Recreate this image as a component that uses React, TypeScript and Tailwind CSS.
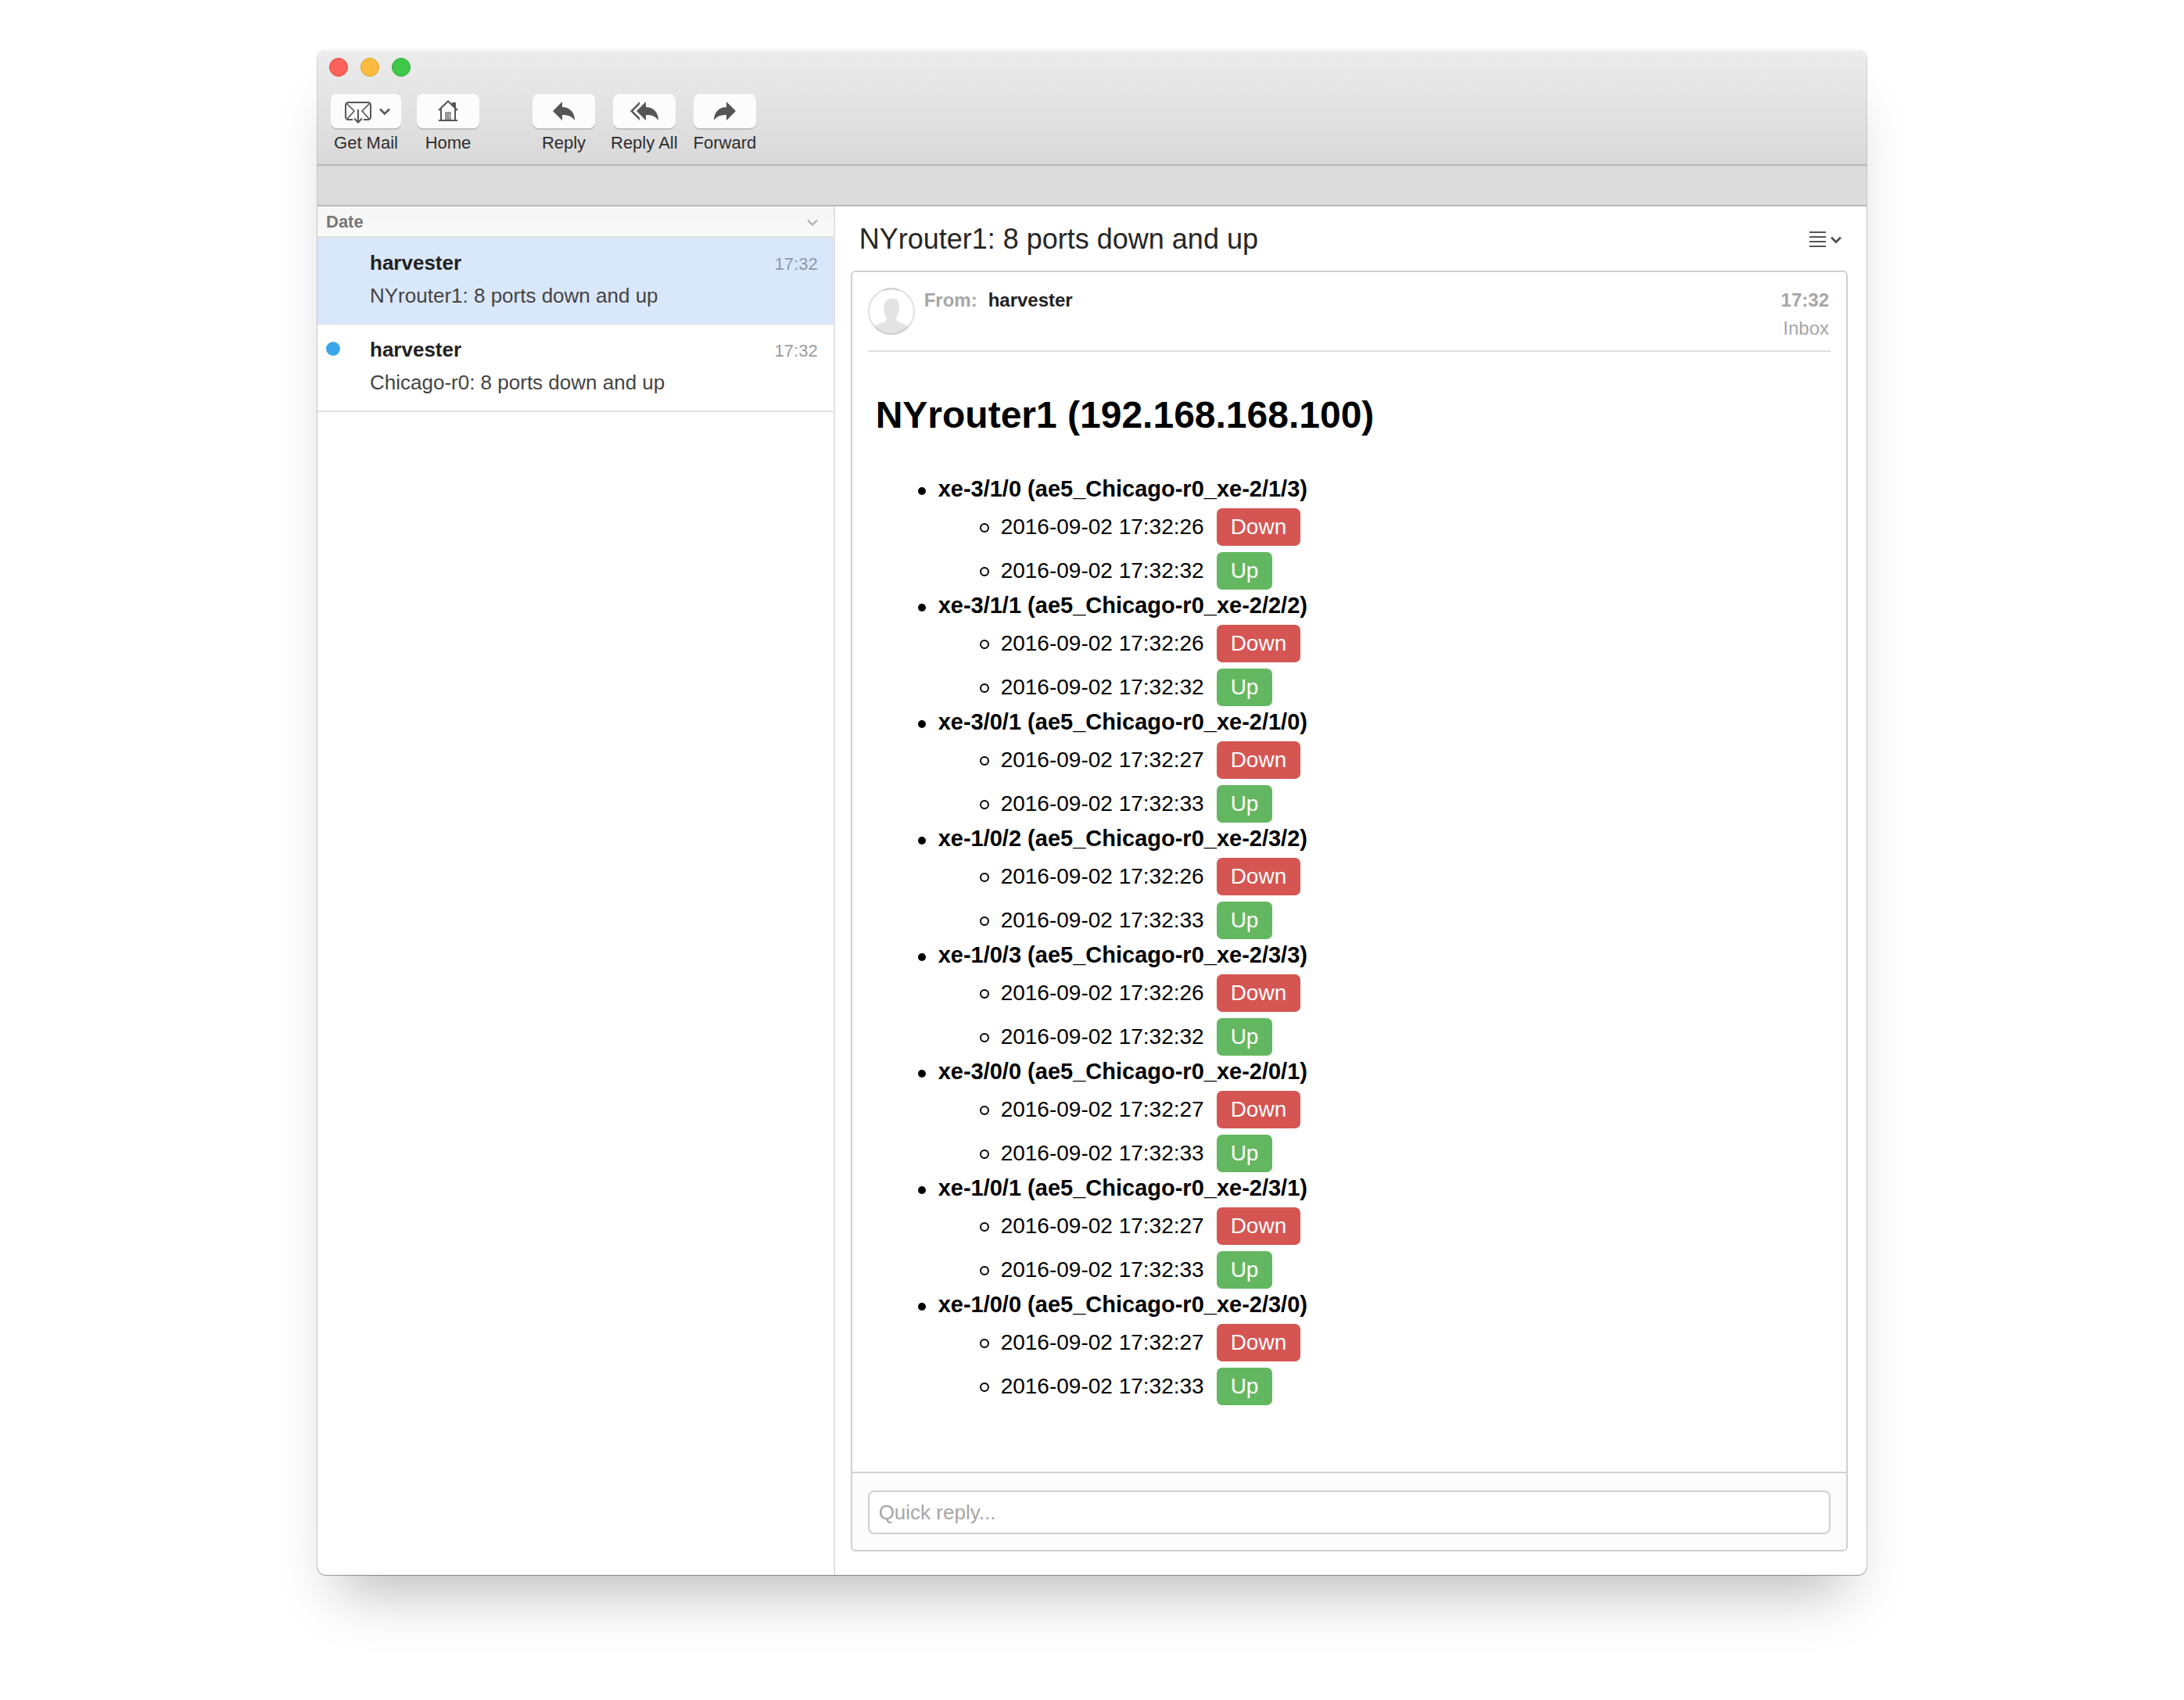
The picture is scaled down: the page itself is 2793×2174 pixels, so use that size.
import React from "react";

type Message = { id: string; sender: string; subject: string; time: string; selected?: boolean; unread?: boolean };

const messages: Message[] = [
  { id: "ny", sender: "harvester", subject: "NYrouter1: 8 ports down and up", time: "17:32", selected: true },
  { id: "chi", sender: "harvester", subject: "Chicago-r0: 8 ports down and up", time: "17:32", unread: true },
];

const ports = [
  { name: "xe-3/1/0 (ae5_Chicago-r0_xe-2/1/3)", down: "2016-09-02 17:32:26", up: "2016-09-02 17:32:32" },
  { name: "xe-3/1/1 (ae5_Chicago-r0_xe-2/2/2)", down: "2016-09-02 17:32:26", up: "2016-09-02 17:32:32" },
  { name: "xe-3/0/1 (ae5_Chicago-r0_xe-2/1/0)", down: "2016-09-02 17:32:27", up: "2016-09-02 17:32:33" },
  { name: "xe-1/0/2 (ae5_Chicago-r0_xe-2/3/2)", down: "2016-09-02 17:32:26", up: "2016-09-02 17:32:33" },
  { name: "xe-1/0/3 (ae5_Chicago-r0_xe-2/3/3)", down: "2016-09-02 17:32:26", up: "2016-09-02 17:32:32" },
  { name: "xe-3/0/0 (ae5_Chicago-r0_xe-2/0/1)", down: "2016-09-02 17:32:27", up: "2016-09-02 17:32:33" },
  { name: "xe-1/0/1 (ae5_Chicago-r0_xe-2/3/1)", down: "2016-09-02 17:32:27", up: "2016-09-02 17:32:33" },
  { name: "xe-1/0/0 (ae5_Chicago-r0_xe-2/3/0)", down: "2016-09-02 17:32:27", up: "2016-09-02 17:32:33" },
];

function Chevron({ className }: { className: string }) {
  return (
    <svg viewBox="0 0 14 9" fill="none" stroke="currentColor" className={className} aria-hidden="true">
      <path d="M1 1.5 L7 7.5 L13 1.5" />
    </svg>
  );
}

function GetMailIcon() {
  return (
    <svg viewBox="0 -4 34 32" fill="none" stroke="#555" strokeWidth="2" className="h-8 w-[34px]" aria-hidden="true">
      <path d="M10 23 H4.5 a3.5 3.5 0 0 1 -3.5 -3.5 V4.5 a3.5 3.5 0 0 1 3.5 -3.5 H29.5 a3.5 3.5 0 0 1 3.5 3.5 V19.5 a3.5 3.5 0 0 1 -3.5 3.5 H24" />
      <path d="M2.5 2.5 L12 12 L3 22 M31.5 2.5 L22 12 L31 22" strokeWidth="1.6" />
      <path d="M17 10 V27 M12 21.5 L17 26.5 L22 21.5" />
    </svg>
  );
}

function HomeIcon() {
  return (
    <svg viewBox="0 0 26 28" fill="none" className="h-7 w-[26px]" aria-hidden="true">
      <path d="M18 3 h5 v9 l-5 -5z" fill="#555" />
      <path d="M1 13 L13 1.5 L25 13 M4 11 V25 M22 11 V25" stroke="#555" strokeWidth="2" />
      <path d="M1 26 H25" stroke="#555" strokeWidth="2" />
      <path d="M9 15 h8 v10 h-8z" fill="#999" />
      <path d="M15 19 h1 v2 h-1z" fill="#fff" />
    </svg>
  );
}

const arrow = "M0 12 L12 0 V7 C21 7 28 13 28 24 C24 18 19 17 12 17 V24 Z";

function ReplyIcon() {
  return (
    <svg viewBox="0 0 28 24" fill="#555" className="h-6 w-7" aria-hidden="true">
      <path d={arrow} />
    </svg>
  );
}

function ReplyAllIcon() {
  return (
    <svg viewBox="0 0 36 24" fill="#555" className="h-6 w-9" aria-hidden="true">
      <path d={arrow} transform="translate(8 0)" />
      <path d="M12 0 V3.5 L3.5 12 L12 20.5 V24 L0 12 Z" />
    </svg>
  );
}

function ForwardIcon() {
  return (
    <svg viewBox="0 0 28 24" fill="#555" className="h-6 w-7" aria-hidden="true">
      <path d={arrow} transform="translate(28 0) scale(-1 1)" />
    </svg>
  );
}

function ToolButton({ label, wide, children }: { label: string; wide?: boolean; children: React.ReactNode }) {
  return (
    <button type="button" className="flex flex-col items-center gap-[5px]">
      <span
        className={
          "flex h-11 items-center justify-center gap-[10px] rounded-lg bg-[#fcfcfc] shadow-[0_2px_0_#c0c0c0] " +
          (wide ? "w-[90px] pl-1" : "w-20")
        }
      >
        {children}
      </span>
      <span className="text-[22px] leading-7 text-[#2e2e2e]">{label}</span>
    </button>
  );
}

function Toolbar() {
  return (
    <header className="rounded-t-[10px] border-b-2 border-[#b8b8b8] bg-linear-to-b from-[#ececec] to-[#d9d9d9] pb-[13px] shadow-[inset_0_2px_0_#f5f5f5]">
      <div className="flex gap-4 pt-[10px] pl-[15px]">
        <button type="button" aria-label="Close" className="size-6 rounded-full border border-[#e2463f] bg-[#fc615c]" />
        <button type="button" aria-label="Minimize" className="size-6 rounded-full border border-[#dfa023] bg-[#fdbc40]" />
        <button type="button" aria-label="Zoom" className="size-6 rounded-full border border-[#27aa35] bg-[#3fc94a]" />
      </div>
      <nav className="flex gap-[68px] pt-[22px] pl-[17px]">
        <div className="flex gap-5">
          <ToolButton label="Get Mail" wide>
            <GetMailIcon />
            <Chevron className="h-[9px] w-[14px] stroke-[2.5] text-[#555]" />
          </ToolButton>
          <ToolButton label="Home">
            <HomeIcon />
          </ToolButton>
        </div>
        <div className="flex gap-5">
          <ToolButton label="Reply">
            <ReplyIcon />
          </ToolButton>
          <ToolButton label="Reply All">
            <ReplyAllIcon />
          </ToolButton>
          <ToolButton label="Forward">
            <ForwardIcon />
          </ToolButton>
        </div>
      </nav>
    </header>
  );
}

function MessageRow({ message }: { message: Message }) {
  return (
    <li className={message.selected ? "border-b border-[#dcdcdc] bg-[#d9e7fa]" : "border-b-2 border-[#e2e2e2]"}>
      <a href={"#" + message.id} className="flex h-[110px] pt-4 pr-5 pl-[11px]">
        <span className="w-14 pt-[6px]">
          {message.unread && <span className="block size-[18px] rounded-full bg-[#39a7e9]" />}
        </span>
        <span className="flex-1">
          <span className="flex items-baseline justify-between">
            <span className="text-[26px] leading-8 font-bold text-[#222]">{message.sender}</span>
            <span className={message.selected ? "text-[22px] leading-8 text-[#8c98a8]" : "text-[22px] leading-8 text-[#9b9b9b]"}>
              {message.time}
            </span>
          </span>
          <span className="mt-2 block text-[26px] leading-8 text-[#444]">{message.subject}</span>
        </span>
      </a>
    </li>
  );
}

function Sidebar() {
  return (
    <aside className="w-[33.4%] border-r-2 border-[#e2e2e2]">
      <button
        type="button"
        className="flex h-10 w-full items-center justify-between border-b-2 border-[#dedede] bg-linear-to-b from-[#f5f5f5] to-[#fafafa] pt-[2px] pr-5 pl-[11px] text-[22px] leading-7 text-[#777]"
      >
        <span className="font-bold">Date</span>
        <Chevron className="h-[9px] w-[14px] stroke-2 text-[#aaa]" />
      </button>
      <ul>
        {messages.map((m) => (
          <MessageRow key={m.id} message={m} />
        ))}
      </ul>
    </aside>
  );
}

function Avatar() {
  return (
    <svg viewBox="0 0 60 60" className="mt-[2px] size-[60px]" aria-hidden="true">
      <clipPath id="avatar-clip">
        <circle cx="30" cy="30" r="29" />
      </clipPath>
      <path
        clipPath="url(#avatar-clip)"
        fill="#e3e3e3"
        d="M25 15 C30 13 36 13 38 17 C41 20 40 27 39 32 C38 36 36 38 36 41 C37 44 41 44 45 46 C50 48 53 50 56 60 H4 C6 50 10 48 15 46 C19 44 23 44 24 41 C24 38 22 36 21 32 C20 26 20 18 25 15 Z"
      />
      <circle cx="30" cy="30" r="29" fill="none" stroke="#e0e0e0" strokeWidth="2" />
      <path d="M20 3 A29 29 0 0 1 40 3 M8.5 49.5 A29 29 0 0 0 51.5 49.5" fill="none" stroke="#cfcfcf" strokeWidth="2" />
    </svg>
  );
}

function Status({ kind }: { kind: "Down" | "Up" }) {
  return (
    <span
      className={
        "flex h-12 items-center rounded-[7px] px-[18px] text-white " +
        (kind === "Down" ? "bg-[#d55552]" : "bg-[#64b761]")
      }
    >
      {kind}
    </span>
  );
}

function PortEvent({ time, kind }: { time: string; kind: "Down" | "Up" }) {
  return (
    <li className="flex h-14 items-center">
      <span className="mt-[2px] mr-[15px] size-3 rounded-full border-2 border-black" />
      <time className="mr-4">{time}</time>
      <Status kind={kind} />
    </li>
  );
}

function MessageView() {
  return (
    <main className="flex flex-1 flex-col pr-6 pb-[30px] pl-5">
      <div className="flex items-center justify-between pt-[22px] pr-2 pb-[20px] pl-[11px]">
        <h1 className="text-[36px] leading-10 text-[#262626]">NYrouter1: 8 ports down and up</h1>
        <button type="button" aria-label="Message options" className="flex items-center gap-[6px] text-[#555]">
          <svg viewBox="0 0 21 20" className="h-5 w-[21px]" stroke="currentColor" strokeWidth="2" aria-hidden="true">
            <path d="M0 1 H21 M0 7 H21 M0 13 H21 M0 19 H21" />
          </svg>
          <Chevron className="h-[9px] w-[14px] stroke-3" />
        </button>
      </div>
      <article className="flex flex-1 flex-col rounded-md border-2 border-[#d0d0d0]">
        <div className="mx-5 flex h-[102px] items-start gap-3 border-b-2 border-[#e0e0e0] pt-[18px] text-2xl leading-9 text-[#a6a6a6]">
          <Avatar />
          <p className="flex gap-[14px] font-bold">
            <span>From:</span>
            <span className="text-[#222]">harvester</span>
          </p>
          <p className="ml-auto pr-[2px] text-right">
            <b className="block">17:32</b>
            Inbox
          </p>
        </div>
        <div className="flex-1 px-[30px] pb-[81px] text-[28px] leading-8 text-black">
          <h2 className="pt-[52px] pb-[49px] text-5xl leading-[58px] font-bold">NYrouter1 (192.168.168.100)</h2>
          <ul className="pl-[54px]">
            {ports.map((p) => (
              <li key={p.name} className="flex items-start">
                <span className="mt-[14px] mr-4 size-[10px] rounded-full bg-black" />
                <div>
                  <strong className="mb-[5px] block text-[29px] leading-8">{p.name}</strong>
                  <ul className="pl-[53px]">
                    <PortEvent time={p.down} kind="Down" />
                    <PortEvent time={p.up} kind="Up" />
                  </ul>
                </div>
              </li>
            ))}
          </ul>
        </div>
        <form className="rounded-b-md border-t-2 border-[#d0d0d0] bg-[#fcfcfc] px-5 pt-[22px] pb-5">
          <input
            type="text"
            aria-label="Quick reply"
            placeholder="Quick reply..."
            className="block h-14 w-full rounded-lg border-2 border-[#d0d0d0] bg-white px-3 text-[26px] placeholder:text-[#a6a6a6]"
          />
        </form>
      </article>
    </main>
  );
}

export default function App() {
  return (
    <div className="min-h-screen bg-white pt-16 pb-40 font-['Liberation_Sans',Arial,sans-serif]">
      <div className="mx-auto flex w-full max-w-[1981px] flex-col rounded-[10px] bg-white shadow-[0_0_0_1px_rgba(0,0,0,0.06),1px_0_0_rgba(0,0,0,0.12),-1px_0_0_rgba(0,0,0,0.12),0_1px_0_rgba(0,0,0,0.3),0_48px_70px_-28px_rgba(0,0,0,0.28)]">
        <Toolbar />
        <div className="h-[52px] border-b-2 border-[#b8b8b8] bg-[#dbdbdb]" />
        <div className="flex">
          <Sidebar />
          <MessageView />
        </div>
      </div>
    </div>
  );
}
